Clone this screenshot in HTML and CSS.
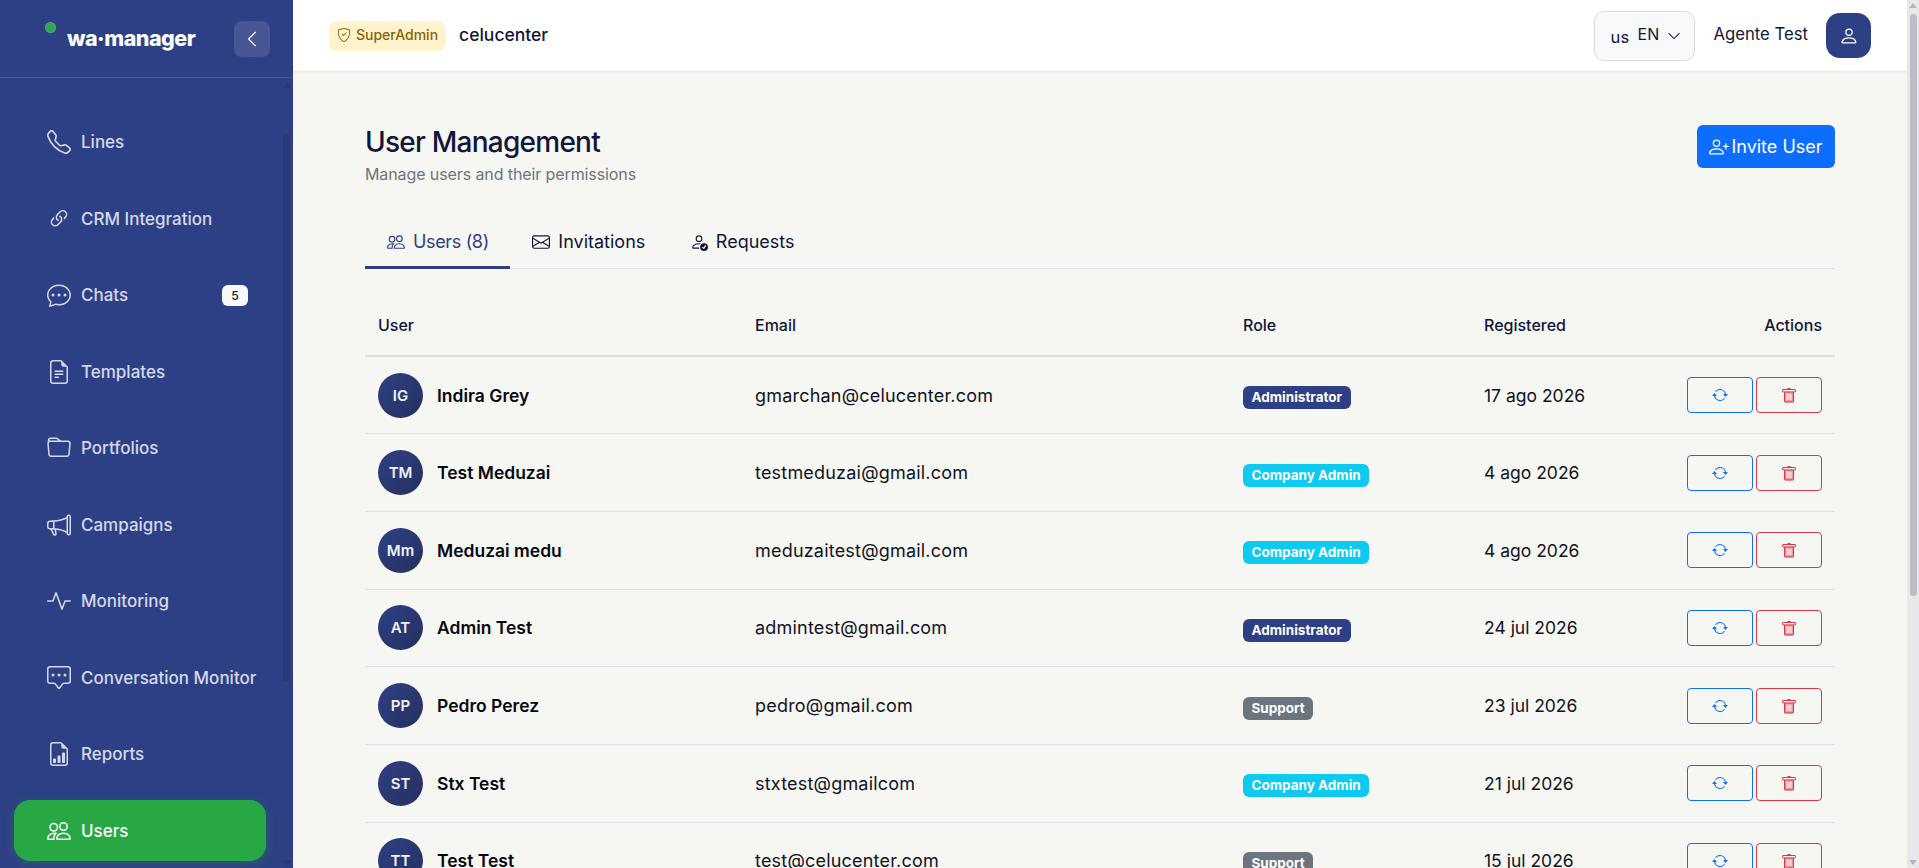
FILE: index.html
```html
<!DOCTYPE html>
<html lang="en">
<head>
  <meta charset="UTF-8" />
  <meta name="viewport" content="width=device-width, initial-scale=1.0" />
  <title>User Management</title>
  <link rel="stylesheet" href="styles.css">
</head>

<body>
  <!-- icon sprite -->
  <svg class="sprite" xmlns="http://www.w3.org/2000/svg">
    <symbol id="i-phone" viewBox="0 0 16 16"><path d="M3.654 1.328a.678.678 0 0 0-1.015-.063L1.605 2.3c-.483.484-.661 1.169-.45 1.77a17.568 17.568 0 0 0 4.168 6.608 17.569 17.569 0 0 0 6.608 4.168c.601.211 1.286.033 1.77-.45l1.034-1.034a.678.678 0 0 0-.063-1.015l-2.307-1.794a.678.678 0 0 0-.58-.122l-2.19.547a1.745 1.745 0 0 1-1.657-.459L5.482 8.062a1.745 1.745 0 0 1-.46-1.657l.548-2.19a.678.678 0 0 0-.122-.58L3.654 1.328zM1.884.511a1.745 1.745 0 0 1 2.612.163L6.29 2.98c.329.423.445.974.315 1.494l-.547 2.19a.678.678 0 0 0 .178.643l2.457 2.457a.678.678 0 0 0 .644.178l2.189-.547a1.745 1.745 0 0 1 1.494.315l2.306 1.794c.829.645.905 1.87.163 2.611l-1.034 1.034c-.74.74-1.846 1.065-2.877.702a18.634 18.634 0 0 1-7.01-4.42 18.634 18.634 0 0 1-4.42-7.009c-.362-1.03-.037-2.137.703-2.877L1.885.511z"/></symbol>
    <symbol id="i-link" viewBox="0 0 16 16"><path d="M4.715 6.542 3.343 7.914a3 3 0 1 0 4.243 4.243l1.828-1.829A3 3 0 0 0 8.586 5.5L8 6.086a1.002 1.002 0 0 0-.154.199 2 2 0 0 1 .861 3.337L6.88 11.45a2 2 0 1 1-2.83-2.83l.793-.792a4.018 4.018 0 0 1-.128-1.287z"/><path d="M6.586 4.672A3 3 0 0 0 7.414 9.5l.775-.776a2 2 0 0 1-.896-3.346L9.12 3.55a2 2 0 1 1 2.83 2.83l-.793.792c.112.42.155.855.128 1.287l1.372-1.372a3 3 0 1 0-4.243-4.243L6.586 4.672z"/></symbol>
    <symbol id="i-chat" viewBox="0 0 16 16"><path d="M5 8a1 1 0 1 1-2 0 1 1 0 0 1 2 0zm4 0a1 1 0 1 1-2 0 1 1 0 0 1 2 0zm3 1a1 1 0 1 0 0-2 1 1 0 0 0 0 2z"/><path d="m2.165 15.803.02-.004c1.83-.363 2.948-.842 3.468-1.105A9.06 9.06 0 0 0 8 15c4.418 0 8-3.134 8-7s-3.582-7-8-7-8 3.134-8 7c0 1.76.743 3.37 1.97 4.6a10.437 10.437 0 0 1-.524 2.318l-.003.011a10.722 10.722 0 0 1-.244.637c-.079.186.074.394.273.362a21.673 21.673 0 0 0 .693-.125zm.8-3.108a1 1 0 0 0-.287-.801C1.618 10.83 1 9.468 1 8c0-3.192 3.004-6 7-6s7 2.808 7 6c0 3.193-3.004 6-7 6a8.06 8.06 0 0 1-2.088-.272 1 1 0 0 0-.711.074c-.387.196-1.24.57-2.634.893a10.97 10.97 0 0 0 .398-2z"/></symbol>
    <symbol id="i-file" viewBox="0 0 16 16"><path d="M5.5 7a.5.5 0 0 0 0 1h5a.5.5 0 0 0 0-1h-5zM5 9.5a.5.5 0 0 1 .5-.5h5a.5.5 0 0 1 0 1h-5a.5.5 0 0 1-.5-.5zm0 2a.5.5 0 0 1 .5-.5h2a.5.5 0 0 1 0 1h-2a.5.5 0 0 1-.5-.5z"/><path d="M9.5 0H4a2 2 0 0 0-2 2v12a2 2 0 0 0 2 2h8a2 2 0 0 0 2-2V4.5L9.5 0zm0 1v2A1.5 1.5 0 0 0 11 4.5h2V14a1 1 0 0 1-1 1H4a1 1 0 0 1-1-1V2a1 1 0 0 1 1-1h5.5z"/></symbol>
    <symbol id="i-folder" viewBox="0 0 16 16"><path d="M.54 3.87.5 3a2 2 0 0 1 2-2h3.672a2 2 0 0 1 1.414.586l.828.828A2 2 0 0 0 9.828 3h3.982a2 2 0 0 1 1.992 2.181l-.637 7A2 2 0 0 1 13.174 14H2.826a2 2 0 0 1-1.991-1.819l-.637-7a1.99 1.99 0 0 1 .342-1.31zM2.19 4a1 1 0 0 0-.996 1.09l.637 7a1 1 0 0 0 .995.91h10.348a1 1 0 0 0 .995-.91l.637-7A1 1 0 0 0 13.81 4H2.19zm4.69-1.707A1 1 0 0 0 6.172 2H2.5a1 1 0 0 0-1 .981l.006.139C1.72 3.042 1.95 3 2.19 3h5.396l-.707-.707z"/></symbol>
    <symbol id="i-megaphone" viewBox="0 0 16 16"><path d="M13 2.5a1.5 1.5 0 0 1 3 0v11a1.5 1.5 0 0 1-3 0v-.214c-2.162-1.241-4.49-1.843-6.912-2.083l.405 2.712A1 1 0 0 1 5.51 15.1h-.548a1 1 0 0 1-.916-.599l-1.85-3.49a68.14 68.14 0 0 0-.202-.003A2.014 2.014 0 0 1 0 9V7a2.02 2.02 0 0 1 1.992-2.013 74.663 74.663 0 0 0 2.483-.075c3.043-.154 6.148-.849 8.525-2.199V2.5zm1 0v11a.5.5 0 0 0 1 0v-11a.5.5 0 0 0-1 0zm-1 1.35c-2.344 1.205-5.209 1.842-8 2.033v4.233c.18.01.359.022.537.036 2.568.189 5.093.744 7.463 1.993V3.85zm-9 6.215v-4.13a95.09 95.09 0 0 1-1.992.052A1.02 1.02 0 0 0 1 7v2c0 .55.448 1.002 1.006 1.009A60.49 60.49 0 0 1 4 10.065zm-.657.975 1.609 3.037.01.024h.548l-.002-.014-.443-2.966a68.019 68.019 0 0 0-1.722-.082z"/></symbol>
    <symbol id="i-activity" viewBox="0 0 16 16"><path fill-rule="evenodd" d="M6 2a.5.5 0 0 1 .47.33L10 12.036l1.53-4.208A.5.5 0 0 1 12 7.5h3.5a.5.5 0 0 1 0 1h-3.15l-1.88 5.17a.5.5 0 0 1-.94 0L6 3.964 4.47 8.171A.5.5 0 0 1 4 8.5H.5a.5.5 0 0 1 0-1h3.15l1.88-5.17A.5.5 0 0 1 6 2Z"/></symbol>
    <symbol id="i-square-dots" viewBox="0 0 16 16"><path d="M14 1a1 1 0 0 1 1 1v8a1 1 0 0 1-1 1h-2.5a2 2 0 0 0-1.6.8L8 14.333 6.1 11.8a2 2 0 0 0-1.6-.8H2a1 1 0 0 1-1-1V2a1 1 0 0 1 1-1h12zM2 0a2 2 0 0 0-2 2v8a2 2 0 0 0 2 2h2.5a1 1 0 0 1 .8.4l1.9 2.533a1 1 0 0 0 1.6 0l1.9-2.533a1 1 0 0 1 .8-.4H14a2 2 0 0 0 2-2V2a2 2 0 0 0-2-2H2z"/><path d="M5 6a1 1 0 1 1-2 0 1 1 0 0 1 2 0zm4 0a1 1 0 1 1-2 0 1 1 0 0 1 2 0zm4 0a1 1 0 1 1-2 0 1 1 0 0 1 2 0z"/></symbol>
    <symbol id="i-report" viewBox="0 0 16 16"><path d="M10 13.5a.5.5 0 0 0 .5.5h1a.5.5 0 0 0 .5-.5v-6a.5.5 0 0 0-.5-.5h-1a.5.5 0 0 0-.5.5v6zm-2.5.5a.5.5 0 0 1-.5-.5v-4a.5.5 0 0 1 .5-.5h1a.5.5 0 0 1 .5.5v4a.5.5 0 0 1-.5.5h-1zm-3 0a.5.5 0 0 1-.5-.5v-2a.5.5 0 0 1 .5-.5h1a.5.5 0 0 1 .5.5v2a.5.5 0 0 1-.5.5h-1z"/><path d="M14 14V4.5L9.5 0H4a2 2 0 0 0-2 2v12a2 2 0 0 0 2 2h8a2 2 0 0 0 2-2zM9.5 3A1.5 1.5 0 0 0 11 4.5h2V14a1 1 0 0 1-1 1H4a1 1 0 0 1-1-1V2a1 1 0 0 1 1-1h5.5v2z"/></symbol>
    <symbol id="i-people" viewBox="0 0 16 16"><path d="M15 14s1 0 1-1-1-4-5-4-5 3-5 4 1 1 1 1h8Zm-7.978-1A.261.261 0 0 1 7 12.996c.001-.264.167-1.03.76-1.72C8.312 10.629 9.282 10 11 10c1.717 0 2.687.63 3.24 1.276.593.69.758 1.457.76 1.72l-.008.002a.274.274 0 0 1-.014.002H7.022ZM11 7a2 2 0 1 0 0-4 2 2 0 0 0 0 4Zm3-2a3 3 0 1 1-6 0 3 3 0 0 1 6 0ZM6.936 9.28a5.88 5.88 0 0 0-1.23-.247A7.35 7.35 0 0 0 5 9c-4 0-5 3-5 4 0 .667.333 1 1 1h4.216A2.238 2.238 0 0 1 5 13c0-1.01.377-2.042 1.09-2.904.243-.294.526-.569.846-.816ZM4.92 10A5.493 5.493 0 0 0 4 13H1c0-.26.164-1.03.76-1.724.545-.636 1.492-1.256 3.16-1.275ZM1.5 5.5a3 3 0 1 1 6 0 3 3 0 0 1-6 0Zm3-2a2 2 0 1 0 0 4 2 2 0 0 0 0-4Z"/></symbol>
    <symbol id="i-person" viewBox="0 0 16 16"><path d="M8 8a3 3 0 1 0 0-6 3 3 0 0 0 0 6Zm2-3a2 2 0 1 1-4 0 2 2 0 0 1 4 0Zm4 8c0 1-1 1-1 1H3s-1 0-1-1 1-4 6-4 6 3 6 4Zm-1-.004c-.001-.246-.154-.986-.832-1.664C11.516 10.68 10.289 10 8 10c-2.29 0-3.516.68-4.168 1.332-.678.678-.83 1.418-.832 1.664h10Z"/></symbol>
    <symbol id="i-person-plus" viewBox="0 0 16 16"><path d="M6 8a3 3 0 1 0 0-6 3 3 0 0 0 0 6zm2-3a2 2 0 1 1-4 0 2 2 0 0 1 4 0zm4 8c0 1-1 1-1 1H1s-1 0-1-1 1-4 6-4 6 3 6 4zm-1-.004c-.001-.246-.154-.986-.832-1.664C9.516 10.68 8.289 10 6 10c-2.29 0-3.516.68-4.168 1.332-.678.678-.83 1.418-.832 1.664h10z"/><path d="M13.5 5a.5.5 0 0 1 .5.5V7h1.5a.5.5 0 0 1 0 1H14v1.5a.5.5 0 0 1-1 0V8h-1.5a.5.5 0 0 1 0-1H13V5.5a.5.5 0 0 1 .5-.5z"/></symbol>
    <symbol id="i-envelope" viewBox="0 0 16 16"><path d="M0 4a2 2 0 0 1 2-2h12a2 2 0 0 1 2 2v8a2 2 0 0 1-2 2H2a2 2 0 0 1-2-2V4Zm2-1a1 1 0 0 0-1 1v.217l7 4.2 7-4.2V4a1 1 0 0 0-1-1H2Zm13 2.383-4.708 2.825L15 11.105V5.383Zm-.034 6.876-5.64-3.471L8 9.583l-1.326-.795-5.64 3.47A1 1 0 0 0 2 13h12a1 1 0 0 0 .966-.741ZM1 11.105l4.708-2.897L1 5.383v5.722Z"/></symbol>
    <symbol id="i-person-check" viewBox="0 0 16 16"><path d="M12.5 16a3.5 3.5 0 1 0 0-7 3.5 3.5 0 0 0 0 7Zm1.679-4.493-1.335 2.226a.75.75 0 0 1-1.174.144l-.774-.773a.5.5 0 0 1 .708-.708l.547.548 1.17-1.951a.5.5 0 1 1 .858.514ZM11 5a3 3 0 1 1-6 0 3 3 0 0 1 6 0ZM8 7a2 2 0 1 0 0-4 2 2 0 0 0 0 4Z"/><path d="M8.256 14a4.474 4.474 0 0 1-.229-1.004H3c.001-.246.154-.986.832-1.664C4.484 10.68 5.711 10 8 10c.26 0 .507.009.74.025.226-.341.496-.65.804-.918C9.077 9.038 8.564 9 8 9c-5 0-6 3-6 4s1 1 1 1h5.256Z"/></symbol>
    <symbol id="i-shield" viewBox="0 0 16 16"><path d="M5.338 1.59a61.44 61.44 0 0 0-2.837.856.481.481 0 0 0-.328.39c-.554 4.157.726 7.19 2.253 9.188a10.725 10.725 0 0 0 2.287 2.233c.346.244.652.42.893.533.12.057.218.095.293.118a.55.55 0 0 0 .101.025.615.615 0 0 0 .1-.025c.076-.023.174-.061.294-.118.24-.113.547-.29.893-.533a10.726 10.726 0 0 0 2.287-2.233c1.527-1.997 2.807-5.031 2.253-9.188a.48.48 0 0 0-.328-.39c-.651-.213-1.75-.56-2.837-.855C9.552 1.29 8.531 1.067 8 1.067c-.53 0-1.552.223-2.662.524zM5.072.56C6.157.265 7.31 0 8 0s1.843.265 2.928.56c1.11.3 2.229.655 2.887.87a1.54 1.54 0 0 1 1.044 1.262c.596 4.477-.787 7.795-2.465 9.99a11.775 11.775 0 0 1-2.517 2.453 7.159 7.159 0 0 1-1.048.625c-.28.132-.581.24-.829.24s-.548-.108-.829-.24a7.158 7.158 0 0 1-1.048-.625 11.777 11.777 0 0 1-2.517-2.453C1.928 10.487.545 7.169 1.141 2.692A1.54 1.54 0 0 1 2.185 1.43 62.456 62.456 0 0 1 5.072.56z"/><path d="M10.854 5.146a.5.5 0 0 1 0 .708l-3 3a.5.5 0 0 1-.708 0l-1.5-1.5a.5.5 0 1 1 .708-.708L7.5 7.793l2.646-2.647a.5.5 0 0 1 .708 0z"/></symbol>
    <symbol id="i-repeat" viewBox="0 0 16 16"><path d="M11.534 7h3.932a.25.25 0 0 1 .192.41l-1.966 2.36a.25.25 0 0 1-.384 0l-1.966-2.36a.25.25 0 0 1 .192-.41zm-11 2h3.932a.25.25 0 0 0 .192-.41L2.692 6.23a.25.25 0 0 0-.384 0L.342 8.59A.25.25 0 0 0 .534 9z"/><path fill-rule="evenodd" d="M8 3c-1.552 0-2.94.707-3.857 1.818a.5.5 0 1 1-.771-.636A6.002 6.002 0 0 1 13.917 7H12.9A5.002 5.002 0 0 0 8 3zM3.1 9a5.002 5.002 0 0 0 8.757 2.182.5.5 0 1 1 .771.636A6.002 6.002 0 0 1 2.083 9H3.1z"/></symbol>
    <symbol id="i-trash" viewBox="0 0 16 16"><path d="M6.5 1h3v1.5h-3z"/><rect x="1.5" y="2.5" width="13" height="2.4" rx=".5" fill="none" stroke="currentColor"/><rect x="3" y="5" width="10" height="10.2" rx="1" fill-opacity=".5"/><path d="M3.5 5v9.2a.8.8 0 0 0 .8.8h7.4a.8.8 0 0 0 .8-.8V5" fill="none" stroke="currentColor"/><path d="M5.6 6.5h1v6.5h-1zM7.5 6.5h1v6.5h-1zM9.4 6.5h1v6.5h-1z" fill="#fff"/></symbol>
    <symbol id="i-left" viewBox="0 0 16 16"><path fill-rule="evenodd" d="M11.354 1.646a.5.5 0 0 1 0 .708L5.707 8l5.647 5.646a.5.5 0 0 1-.708.708l-6-6a.5.5 0 0 1 0-.708l6-6a.5.5 0 0 1 .708 0z"/></symbol>
    <symbol id="i-down" viewBox="0 0 16 16"><path fill-rule="evenodd" d="M1.646 4.646a.5.5 0 0 1 .708 0L8 10.293l5.646-5.647a.5.5 0 0 1 .708.708l-6 6a.5.5 0 0 1-.708 0l-6-6a.5.5 0 0 1 0-.708z"/></symbol>
  </svg>

  <div class="app">
    <aside class="sidebar">
      <div class="brand">
        <span class="brand-dot"></span>
        <span class="brand-name">wa·manager</span>
        <button class="collapse-btn"><svg class="icon-18"><use href="#i-left"/></svg></button>
      </div>

      <div class="nav-wrap">
        <nav class="nav">
          <a class="nav-item"><svg class="nav-icon"><use href="#i-phone"/></svg>Lines</a>
          <a class="nav-item"><svg class="nav-icon"><use href="#i-link"/></svg>CRM Integration</a>
          <a class="nav-item"><svg class="nav-icon"><use href="#i-chat"/></svg>Chats<span class="nav-badge">5</span></a>
          <a class="nav-item"><svg class="nav-icon"><use href="#i-file"/></svg>Templates</a>
          <a class="nav-item"><svg class="nav-icon"><use href="#i-folder"/></svg>Portfolios</a>
          <a class="nav-item"><svg class="nav-icon"><use href="#i-megaphone"/></svg>Campaigns</a>
          <a class="nav-item"><svg class="nav-icon"><use href="#i-activity"/></svg>Monitoring</a>
          <a class="nav-item"><svg class="nav-icon"><use href="#i-square-dots"/></svg>Conversation Monitor</a>
          <a class="nav-item"><svg class="nav-icon"><use href="#i-report"/></svg>Reports</a>
          <a class="nav-item active"><svg class="nav-icon"><use href="#i-people"/></svg>Users</a>
        </nav>
        <div class="side-scroll">
          <span class="side-arrow up"></span>
          <span class="side-thumb"></span>
          <span class="side-arrow down"></span>
        </div>
      </div>
    </aside>

    <div class="main">
      <header class="topbar">
        <span class="role-chip"><svg class="icon-14"><use href="#i-shield"/></svg>SuperAdmin</span>
        <span class="company">celucenter</span>
        <div class="topbar-right">
          <div class="lang-select">
            <span class="lang-flag">us</span>
            <span class="lang-code">EN</span>
            <svg class="icon-14"><use href="#i-down"/></svg>
          </div>
          <span class="agent-name">Agente Test</span>
          <button class="user-btn"><svg class="icon-20"><use href="#i-person"/></svg></button>
        </div>
      </header>

      <main class="content">
        <div class="page-head">
          <div>
            <h1>User Management</h1>
            <p>Manage users and their permissions</p>
          </div>
          <button class="invite-btn"><svg class="icon-20"><use href="#i-person-plus"/></svg>Invite User</button>
        </div>

        <div class="tabs">
          <a class="tab active"><svg class="icon-18"><use href="#i-people"/></svg>Users (8)</a>
          <a class="tab"><svg class="icon-18"><use href="#i-envelope"/></svg>Invitations</a>
          <a class="tab"><svg class="icon-18"><use href="#i-person-check"/></svg>Requests</a>
        </div>

        <table class="users-table">
          <thead>
            <tr>
              <th class="col-user">User</th>
              <th class="col-email">Email</th>
              <th class="col-role">Role</th>
              <th class="col-date">Registered</th>
              <th class="col-actions">Actions</th>
            </tr>
          </thead>
          <tbody>
            <tr>
              <td><div class="user-cell"><span class="avatar">IG</span><strong>Indira Grey</strong></div></td>
              <td class="email">gmarchan@celucenter.com</td>
              <td><span class="badge admin">Administrator</span></td>
              <td>17 ago 2026</td>
              <td><div class="actions"><button class="btn-reset"><svg class="icon-16"><use href="#i-repeat"/></svg></button><button class="btn-delete"><svg class="icon-16"><use href="#i-trash"/></svg></button></div></td>
            </tr>
            <tr>
              <td><div class="user-cell"><span class="avatar">TM</span><strong>Test Meduzai</strong></div></td>
              <td class="email">testmeduzai@gmail.com</td>
              <td><span class="badge company-admin">Company Admin</span></td>
              <td>4 ago 2026</td>
              <td><div class="actions"><button class="btn-reset"><svg class="icon-16"><use href="#i-repeat"/></svg></button><button class="btn-delete"><svg class="icon-16"><use href="#i-trash"/></svg></button></div></td>
            </tr>
            <tr>
              <td><div class="user-cell"><span class="avatar">Mm</span><strong>Meduzai medu</strong></div></td>
              <td class="email">meduzaitest@gmail.com</td>
              <td><span class="badge company-admin">Company Admin</span></td>
              <td>4 ago 2026</td>
              <td><div class="actions"><button class="btn-reset"><svg class="icon-16"><use href="#i-repeat"/></svg></button><button class="btn-delete"><svg class="icon-16"><use href="#i-trash"/></svg></button></div></td>
            </tr>
            <tr>
              <td><div class="user-cell"><span class="avatar">AT</span><strong>Admin Test</strong></div></td>
              <td class="email">admintest@gmail.com</td>
              <td><span class="badge admin">Administrator</span></td>
              <td>24 jul 2026</td>
              <td><div class="actions"><button class="btn-reset"><svg class="icon-16"><use href="#i-repeat"/></svg></button><button class="btn-delete"><svg class="icon-16"><use href="#i-trash"/></svg></button></div></td>
            </tr>
            <tr>
              <td><div class="user-cell"><span class="avatar">PP</span><strong>Pedro Perez</strong></div></td>
              <td class="email">pedro@gmail.com</td>
              <td><span class="badge support">Support</span></td>
              <td>23 jul 2026</td>
              <td><div class="actions"><button class="btn-reset"><svg class="icon-16"><use href="#i-repeat"/></svg></button><button class="btn-delete"><svg class="icon-16"><use href="#i-trash"/></svg></button></div></td>
            </tr>
            <tr>
              <td><div class="user-cell"><span class="avatar">ST</span><strong>Stx Test</strong></div></td>
              <td class="email">stxtest@gmailcom</td>
              <td><span class="badge company-admin">Company Admin</span></td>
              <td>21 jul 2026</td>
              <td><div class="actions"><button class="btn-reset"><svg class="icon-16"><use href="#i-repeat"/></svg></button><button class="btn-delete"><svg class="icon-16"><use href="#i-trash"/></svg></button></div></td>
            </tr>
            <tr>
              <td><div class="user-cell"><span class="avatar">TT</span><strong>Test Test</strong></div></td>
              <td class="email">test@celucenter.com</td>
              <td><span class="badge support">Support</span></td>
              <td>15 jul 2026</td>
              <td><div class="actions"><button class="btn-reset"><svg class="icon-16"><use href="#i-repeat"/></svg></button><button class="btn-delete"><svg class="icon-16"><use href="#i-trash"/></svg></button></div></td>
            </tr>
          </tbody>
        </table>
      </main>
    </div>

    <div class="page-scroll">
      <span class="page-arrow up"></span>
      <span class="page-thumb"></span>
      <span class="page-arrow down"></span>
    </div>
  </div>
</body>
</html>
```

FILE: styles.css
```css
:root {
  --navy: #2e4085;
  --navy-dark: #2a3877;
  --green: #28a745;
  --blue: #0d6efd;
  --cyan: #0dcaf0;
  --grey: #6c757d;
  --red: #dc3545;
  --page: #f6f6f2;
  --ink: #10163a;
}

* {
  box-sizing: border-box;
}

html,
body {
  height: 100%;
  overflow: hidden;
}

body {
  margin: 0;
  font-family: Inter, "Noto Sans", Arial, sans-serif;
  color: var(--ink);
  background: var(--page);
}

button {
  font-family: inherit;
  cursor: pointer;
}

svg {
  fill: currentColor;
  flex-shrink: 0;
}

.sprite {
  display: none;
}

.icon-14 { width: 14px; height: 14px; }
.icon-16 { width: 16px; height: 16px; }
.icon-18 { width: 18px; height: 18px; }
.icon-20 { width: 20px; height: 20px; }

.app {
  display: flex;
  height: 100vh;
  overflow: hidden;
}

/* sidebar */
.sidebar {
  width: 293px;
  flex-shrink: 0;
  display: flex;
  flex-direction: column;
  background: var(--navy);
}

.brand {
  position: relative;
  height: 78px;
  flex-shrink: 0;
  display: flex;
  align-items: center;
  padding: 0 23px 0 67px;
  border-bottom: 1px solid rgba(255, 255, 255, 0.12);
}

.brand-dot {
  position: absolute;
  left: 46px;
  top: 23px;
  width: 9px;
  height: 9px;
  border-radius: 50%;
  background: #2cab4d;
  box-shadow: 0 0 0 1px rgba(140, 230, 170, 0.55);
}

.brand-name {
  flex: 1;
  padding-bottom: 2px;
  font-size: 21.5px;
  font-weight: 800;
  letter-spacing: -0.5px;
  color: #fff;
}

.collapse-btn {
  width: 36px;
  height: 36px;
  display: flex;
  align-items: center;
  justify-content: center;
  border: none;
  border-radius: 8px;
  color: #fff;
  background: rgba(255, 255, 255, 0.12);
}

.nav-wrap {
  flex: 1;
  display: flex;
  min-height: 0;
}

.nav {
  flex: 1;
  display: flex;
  flex-direction: column;
  gap: 15.5px;
  padding: 33.5px 14px 0;
  overflow: hidden;
}

.nav-item {
  height: 61px;
  flex-shrink: 0;
  display: flex;
  align-items: center;
  gap: 10px;
  padding: 0 18px 0 33px;
  border-radius: 16px;
  font-size: 17px;
  font-weight: 500;
  white-space: nowrap;
  color: #d5d9ec;
}

.nav-icon {
  width: 24px;
  height: 24px;
}

.nav-item.active {
  color: #fff;
  background: var(--green);
  box-shadow: 0 2px 10px rgba(40, 167, 69, 0.3);
}

.nav-badge {
  margin-left: auto;
  width: 26px;
  height: 21px;
  display: flex;
  align-items: center;
  justify-content: center;
  border-radius: 6px;
  font-size: 12px;
  color: #222;
  background: #f8f9fa;
}

.side-scroll {
  width: 13px;
  flex-shrink: 0;
  display: flex;
  flex-direction: column;
  align-items: center;
  padding: 2px 3px;
}

.side-thumb {
  width: 7px;
  height: 546px;
  margin-top: 47px;
  border-radius: 4px;
  background: var(--navy-dark);
}

.side-arrow {
  width: 0;
  height: 0;
  border-left: 4px solid transparent;
  border-right: 4px solid transparent;
}

.side-arrow.up {
  margin-top: 2px;
  border-bottom: 6px solid var(--navy-dark);
}

.side-arrow.down {
  margin-top: auto;
  border-top: 6px solid var(--navy-dark);
}

/* topbar */
.main {
  flex: 1;
  min-width: 0;
  display: flex;
  flex-direction: column;
  overflow: hidden;
}

.topbar {
  position: relative;
  height: 71px;
  flex-shrink: 0;
  display: flex;
  align-items: center;
  padding: 0 36px;
  background: #fff;
  box-shadow: 0 1px 3px rgba(0, 0, 0, 0.08);
}

.role-chip {
  height: 30px;
  display: flex;
  align-items: center;
  gap: 5px;
  padding: 0 7.5px 2px 8px;
  border-radius: 8px;
  font-size: 14px;
  font-weight: 500;
  color: #856404;
  background: #fff3cd;
}

.company {
  margin-left: 13.5px;
  padding-bottom: 3px;
  font-size: 17.5px;
  font-weight: 500;
}

.topbar-right {
  margin-left: auto;
  display: flex;
  align-items: center;
}

.lang-select {
  width: 101px;
  height: 50px;
  display: flex;
  align-items: center;
  gap: 8px;
  padding: 0 14px 0 15px;
  border: 1px solid #d9dbe3;
  border-radius: 10px;
  font-size: 16px;
  background: #f8f9fa;
}

.lang-flag {
  padding-top: 3px;
  font-size: 16.5px;
  letter-spacing: 0.3px;
}

.lang-code {
  padding-bottom: 3px;
}

.agent-name {
  margin-left: 18px;
  padding-bottom: 3px;
  font-size: 16.7px;
}

.user-btn {
  width: 45px;
  height: 45px;
  margin-left: 18px;
  display: flex;
  align-items: center;
  justify-content: center;
  border: none;
  border-radius: 14px;
  color: #fff;
  background: var(--navy);
}

/* content */
.content {
  flex: 1;
  padding: 54px 72px 0;
}

.page-head {
  display: flex;
  justify-content: space-between;
  align-items: flex-start;
}

.page-head h1 {
  margin: 0;
  padding-top: 1px;
  font-size: 28px;
  line-height: 32px;
  font-weight: 500;
  letter-spacing: -0.75px;
}

.page-head p {
  margin: 4px 0 0;
  font-size: 16px;
  line-height: 24px;
  letter-spacing: -0.1px;
  color: var(--grey);
}

.invite-btn {
  width: 138px;
  height: 43px;
  display: flex;
  align-items: center;
  justify-content: center;
  gap: 2px;
  padding: 0;
  border: none;
  border-radius: 6px;
  font-size: 18px;
  color: #fff;
  background: var(--blue);
}

.tabs {
  margin-top: 32px;
  display: flex;
  border-bottom: 1px solid #dfe0ea;
}

.tab {
  height: 51px;
  margin-bottom: -1px;
  display: flex;
  align-items: center;
  gap: 8px;
  padding: 0 22px 4px;
  font-size: 18px;
}

.tab + .tab {
  margin-left: 0.5px;
}

.tab.active {
  padding-right: 21px;
  padding-bottom: 1px;
  letter-spacing: -0.35px;
  color: var(--navy);
  border-bottom: 3px solid var(--navy);
}

.users-table {
  width: 100%;
  margin-top: 26px;
  table-layout: fixed;
  border-collapse: collapse;
}

.users-table th {
  height: 61px;
  padding: 0 13px;
  text-align: left;
  font-size: 16px;
  font-weight: 500;
  border-bottom: 2px solid #dedfd8;
}

.col-user { width: 377px; }
.col-email { width: 488px; }
.col-role { width: 241px; }
.col-date { width: 180px; }

.users-table .col-actions {
  text-align: right;
}

.users-table td {
  height: 77.7px;
  padding: 0 13px;
  font-size: 17.5px;
  color: #10131f;
  border-bottom: 1px solid #dfe0e4;
}

.users-table td.email {
  font-size: 18px;
  letter-spacing: 0.2px;
}

.user-cell {
  display: flex;
  align-items: center;
  gap: 14px;
}

.user-cell strong {
  font-size: 17.5px;
  font-weight: 600;
  color: #05070f;
}

.avatar {
  width: 45px;
  height: 45px;
  flex-shrink: 0;
  display: flex;
  align-items: center;
  justify-content: center;
  border-radius: 50%;
  font-size: 15px;
  font-weight: 600;
  color: #f0f2fa;
  background: linear-gradient(135deg, #2e4085, #26305f);
}

.badge {
  display: inline-block;
  height: 23px;
  margin-top: 5px;
  line-height: 23px;
  padding: 0 8.5px;
  border-radius: 6px;
  font-size: 13.5px;
  font-weight: 700;
  color: #fff;
}

.badge.admin { background: var(--navy); }
.badge.company-admin { background: var(--cyan); }
.badge.support { background: var(--grey); }

.actions {
  display: flex;
  justify-content: flex-end;
  gap: 3px;
}

.actions button {
  width: 66px;
  height: 36px;
  display: flex;
  align-items: center;
  justify-content: center;
  border: 1px solid;
  border-radius: 4px;
  background: transparent;
}

.btn-reset { color: var(--blue); }
.btn-delete { color: var(--red); }

/* page scrollbar */
.page-scroll {
  width: 12px;
  flex-shrink: 0;
  display: flex;
  flex-direction: column;
  align-items: center;
  padding: 3px 0;
  background: #e8e8e8;
}

.page-arrow {
  width: 0;
  height: 0;
  border-left: 4px solid transparent;
  border-right: 4px solid transparent;
}

.page-arrow.up {
  border-bottom: 5px solid #b4b5bd;
}

.page-arrow.down {
  margin-top: auto;
  border-top: 5px solid #b4b5bd;
}

.page-thumb {
  width: 7px;
  height: 582px;
  margin-top: 6px;
  border-radius: 4px;
  background: #bcbdc5;
}
```
